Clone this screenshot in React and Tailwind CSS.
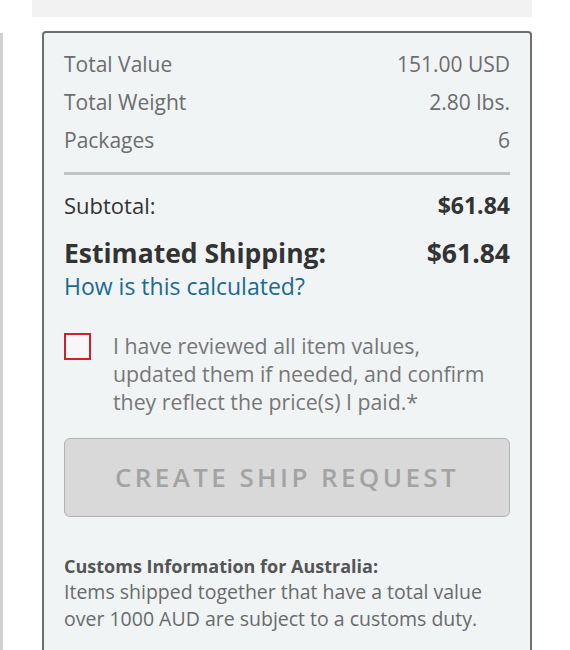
export default function App() {
  const rows = [
    { label: "Total Value", value: "151.00 USD" },
    { label: "Total Weight", value: "2.80 lbs." },
    { label: "Packages", value: "6" },
  ];

  return (
    <div className="relative w-[570px] h-[650px] overflow-hidden bg-white" style={{ fontFamily: "'Open Sans', 'Noto Sans', sans-serif" }}>
      {/* top panel remnant */}
      <div className="ml-[32px] w-[500px] h-[17px] bg-[#f2f2f2]"></div>

      <div className="flex mt-[14px]">
        {/* left edge strip */}
        <div className="w-[3px] h-[620px] mt-[2px] bg-[#d0d0d0]"></div>

        {/* summary card */}
        <div className="ml-[39px] w-[490px] h-[640px] bg-[#f0f4f5] border-2 border-[#6e6e6e] rounded-t-[4px] px-[20px] pt-[13px]">
          <div className="flex flex-col">
            {rows.map((r) => (
              <div key={r.label} className="flex justify-between items-center h-[38px] text-[21px] text-[#6d6d6d]">
                <span>{r.label}</span>
                <span>{r.value}</span>
              </div>
            ))}
          </div>

          <div className="h-[3px] bg-[#bfc3c4] mt-[12px]"></div>

          <div className="flex justify-between items-center mt-[16px] text-[22px] text-[#333] leading-[28px]">
            <span>Subtotal:</span>
            <span className="font-bold text-[23px]">$61.84</span>
          </div>

          <div className="flex justify-between items-center mt-[19px] text-[26.5px] font-bold text-[#333] leading-[30px]">
            <span>Estimated Shipping:</span>
            <span>$61.84</span>
          </div>

          <a className="block mt-[4px] text-[23px] text-[#1b6b8f] leading-[28px]">How is this calculated?</a>

          <label className="flex items-start mt-[32px]">
            <span className="mt-[1px] w-[27px] h-[27px] border-2 border-[#d21f2b] bg-[#f7f7f7] shrink-0"></span>
            <span className="ml-[22px] text-[21.3px] leading-[28px] text-[#777]">
              I have reviewed all item values,<br />updated them if needed, and confirm<br />they reflect the price(s) I paid.*
            </span>
          </label>

          <button className="mt-[22px] w-full h-[79px] bg-[#d9d9d9] border border-[#b3b3b3] rounded-[6px] text-[26px] font-semibold tracking-[3.4px] text-[#a3a3a3]">
            CREATE SHIP REQUEST
          </button>

          <div className="mt-[37px] text-[18px] font-bold text-[#555] leading-[24px]">Customs Information for Australia:</div>
          <p className="text-[19.5px] text-[#6a6a6a] leading-[27px]">
            Items shipped together that have a total value<br />over 1000 AUD are subject to a customs duty.
          </p>
        </div>
      </div>
    </div>
  );
}
